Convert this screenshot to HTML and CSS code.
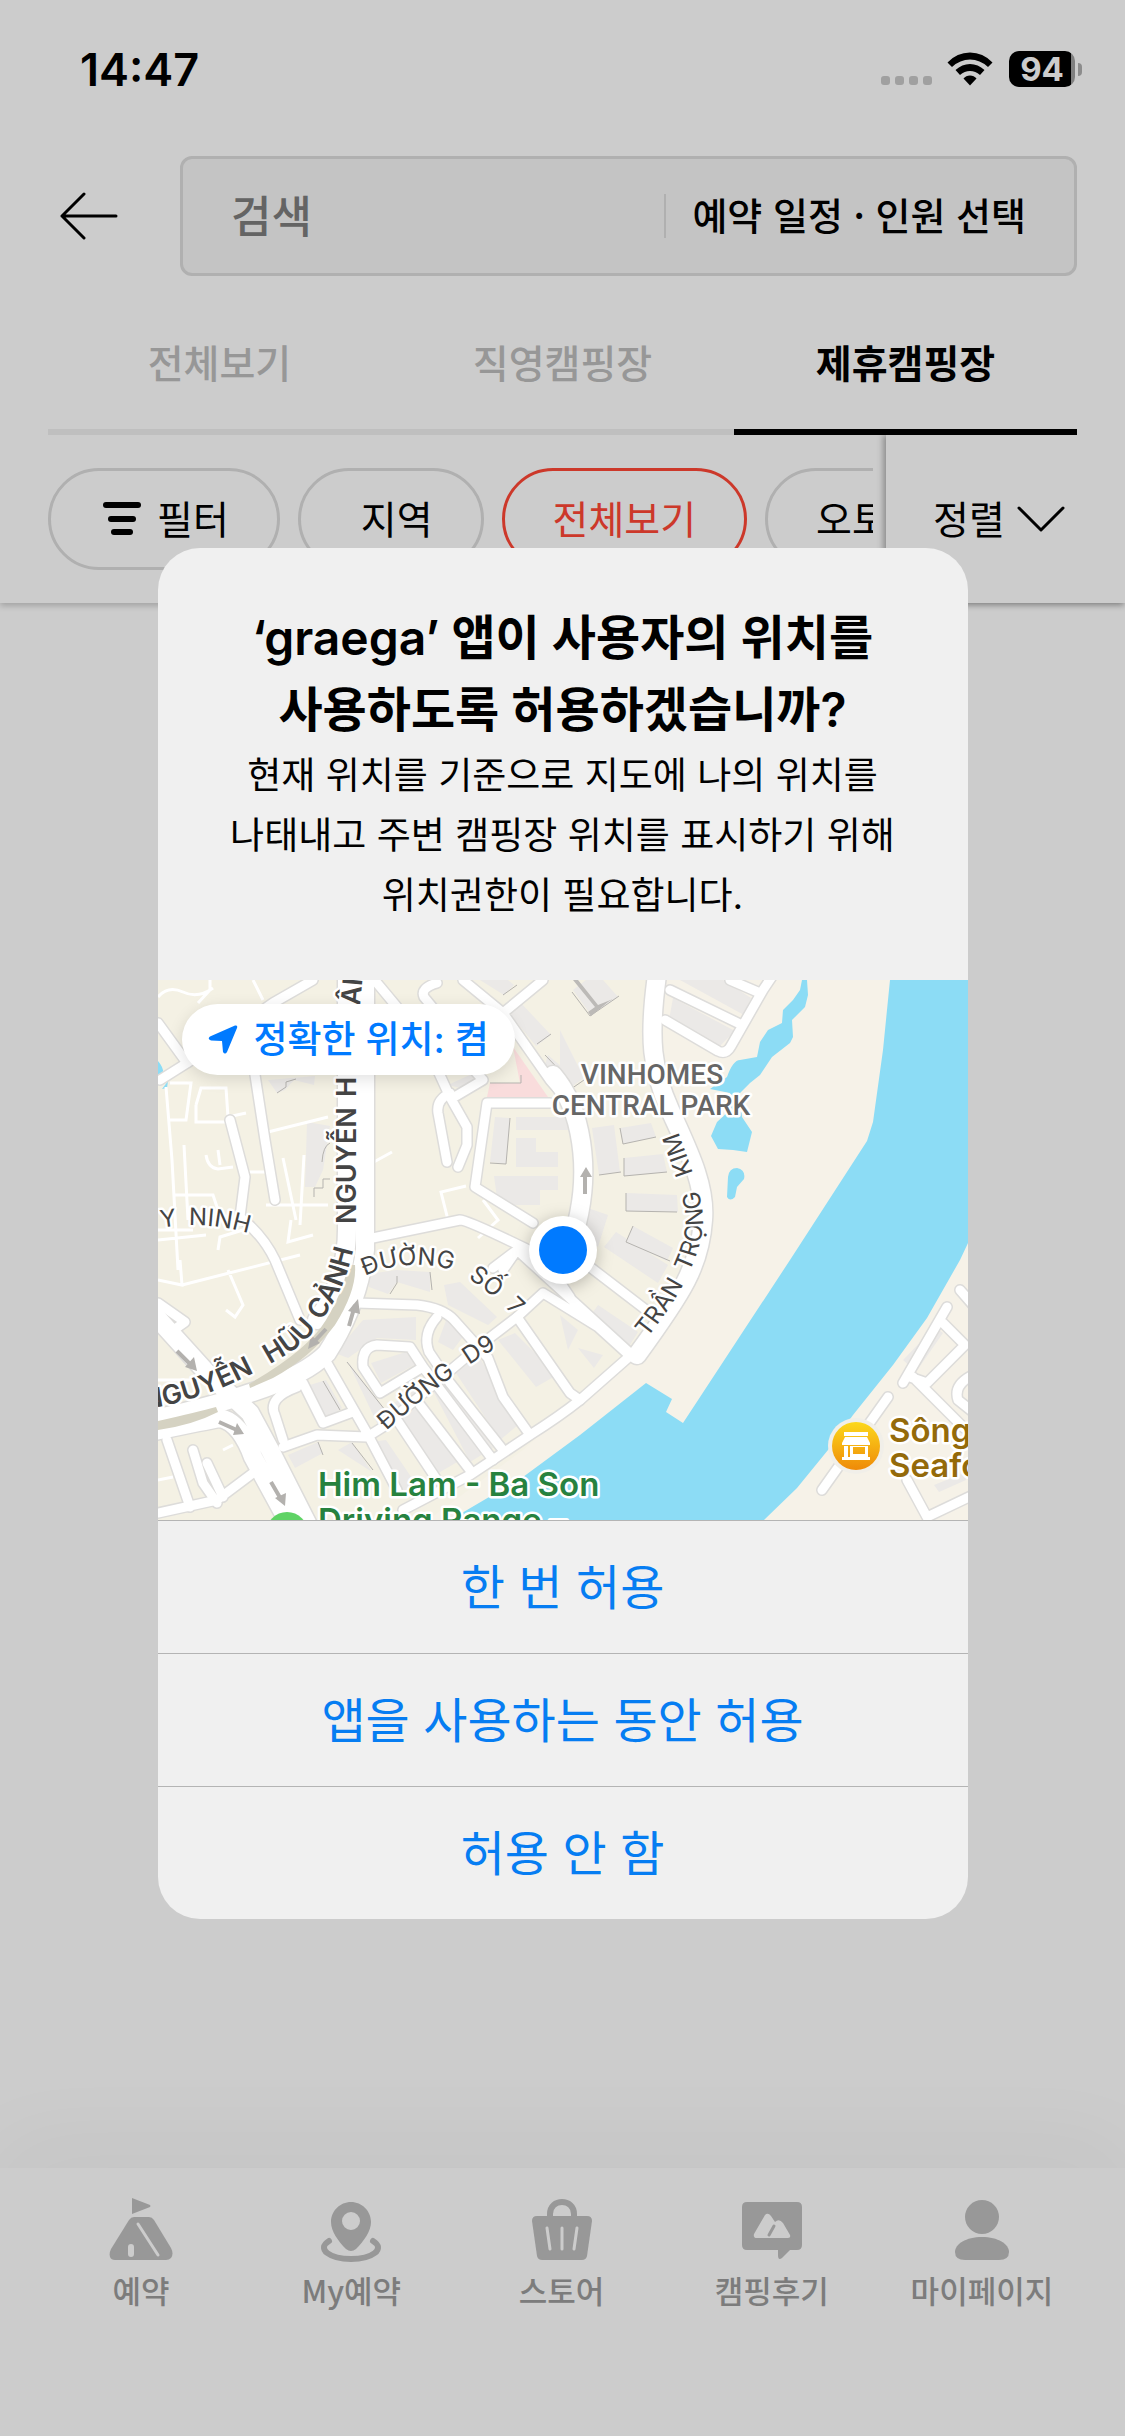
FILE: index.html
```html
<!DOCTYPE html>
<html lang="ko">
<head>
	<meta charset="utf-8">
	<meta name="viewport" content="width=device-width, initial-scale=1">
	<title>graega</title>
	<link rel="stylesheet" href="styles.css">
</head>
<body>
	<div class="status-bar">
		<span class="time">14:47</span>
		<div class="status-icons">
			<svg class="signal" width="52" height="34" viewBox="0 0 52 34" fill="#c9c9c9">
				<rect x="0" y="24" width="9" height="9" rx="3"/><rect x="14" y="24" width="9" height="9" rx="3"/><rect x="28" y="24" width="9" height="9" rx="3"/><rect x="42" y="24" width="9" height="9" rx="3"/>
			</svg>
			<svg class="wifi" width="46" height="34" viewBox="0 0 46 34">
				<path d="M0.500 10.500Q10 .500 23 .500T45.500 10.500L41 15Q33 7.500 23 7.500T5 15Z"/>
				<path d="M8.500 18Q15 12 23 12T37.500 18L33 23Q28.500 19 23 19T13 23Z"/>
				<path d="M16.500 26.500Q19 23.500 23 23.500T29.500 26.500L23 33.500Z"/>
			</svg>
			<span class="battery">94</span>
			<span class="battery-tip"></span>
		</div>
	</div>

	<div class="search-row">
		<button class="back" aria-label="뒤로">
			<svg width="58" height="48" viewBox="0 0 58 48" fill="none" stroke="#000" stroke-width="3" stroke-linecap="round" stroke-linejoin="round"><path d="M56 24H2M24 2 2 24 24 46"/></svg>
		</button>
		<div class="search-box">
			<input type="text" placeholder="검색" aria-label="검색">
			<button class="schedule">예약 일정 · 인원 선택</button>
		</div>
	</div>

	<div class="tabs">
		<button class="tab">전체보기</button>
		<button class="tab">직영캠핑장</button>
		<button class="tab active">제휴캠핑장</button>
	</div>

	<div class="filters">
		<div class="chips">
			<button class="chip chip-filter">
				<svg width="38" height="34" viewBox="0 0 38 34"><rect width="38" height="6" rx="3"/><rect x="5" y="14" width="28" height="6" rx="3"/><rect x="8" y="27" width="22" height="6" rx="3"/></svg>
				<span>필터</span>
			</button>
			<button class="chip chip-area"><span>지역</span></button>
			<button class="chip selected"><span>전체보기</span></button>
			<button class="chip"><span>오토캠핑</span></button>
		</div>
		<button class="sort">
			<span>정렬</span>
			<svg width="48" height="26" viewBox="0 0 48 26" fill="none" stroke="#000" stroke-width="3" stroke-linecap="round" stroke-linejoin="round"><path d="M2 2 24 24 46 2"/></svg>
		</button>
	</div>

	<div class="content"></div>

	<div class="bottom-nav">
		<a href="#">
			<svg width="64" height="64" viewBox="0 0 64 64">
				<path d="M23 0 41 7Q42 8 41 9L23 16Z"/>
				<path d="M25 19H40Q43 19 45 22L62 50Q65 56 62 60 60 62 57 62H6Q2 62 1 59 0 55 2 51L20 22Q22 19 25 19Z"/>
				<path class="cut" d="M29 26 49 57" stroke-width="3" stroke-linecap="round"/>
				<path class="cut" d="M22 49V56" stroke-width="6" stroke-linecap="round"/>
			</svg>
			예약
		</a>
		<a href="#">
			<svg width="64" height="64" viewBox="0 0 64 64">
				<path fill-rule="evenodd" d="M32 4C43 4 52 13 52 24 52 33 45 43 37 51Q32 55 27 51C19 43 12 33 12 24 12 13 21 4 32 4ZM32 14A9 9 0 1 0 32 32 9 9 0 1 0 32 14Z"/>
				<path d="M10 43C-3 51 11 61 32 61S67 51 54 43" fill="none" stroke="#bfbfbf" stroke-width="6" stroke-linecap="round"/>
			</svg>
			My예약
		</a>
		<a href="#">
			<svg width="64" height="64" viewBox="0 0 64 64">
				<path d="M20 20V16C20 0 44 0 44 16V20" fill="none" stroke="#bfbfbf" stroke-width="6"/>
				<path d="M7 18H57Q62 18 62 23L57 58Q56 62 52 62H12Q8 62 7 58L2 23Q2 18 7 18Z"/>
				<path class="cut" d="M17 30 20 51M32 30V51M47 30 44 51" stroke-width="3" stroke-linecap="round"/>
			</svg>
			스토어
		</a>
		<a href="#">
			<svg width="64" height="64" viewBox="0 0 64 64">
				<path d="M7 4H57Q62 4 62 9V47Q62 52 57 52H50L42 60Q38 63 38 57V52H7Q2 52 2 47V9Q2 4 7 4Z"/>
				<path d="M25 17Q28 14 31 18L35 24Q39 20 43 25L50 37Q51 40 48 40H17Q13 40 14 36Z" fill="#fff"/>
				<path d="M34 28 29 37" stroke="#bfbfbf" stroke-width="3" stroke-linecap="round"/>
			</svg>
			캠핑후기
		</a>
		<a href="#">
			<svg width="64" height="64" viewBox="0 0 64 64">
				<circle cx="32" cy="19" r="17"/>
				<path d="M32 39C48 39 59 46 59 54Q59 62 49 62H15Q5 62 5 54C5 46 16 39 32 39Z"/>
			</svg>
			마이페이지
		</a>
	</div>

	<div class="overlay">
		<div class="alert" role="dialog" aria-labelledby="alert-title">
			<div class="alert-text">
				<h1 id="alert-title">‘graega’ 앱이 사용자의 위치를<br>사용하도록 허용하겠습니까?</h1>
				<p>현재 위치를 기준으로 지도에 나의 위치를<br>나태내고 주변 캠핑장 위치를 표시하기 위해<br>위치권한이 필요합니다.</p>
			</div>
			<div class="map">
				<svg viewBox="0 0 810 540">
					<defs>
						<linearGradient id="poi" x1="0" y1="0" x2="0" y2="1"><stop offset="0" stop-color="#fcd81c"/><stop offset="1" stop-color="#ef8a08"/></linearGradient>
						<path id="t-huu" d="M-14 429C20 425 60 412 99 391S148 364 166 337 190 295 198 258"/>
						<path id="t-up" d="M198 244V60"/>
						<path id="t-top" d="M202 26 207 -30"/>
						<path id="t-ninh" d="M3 248Q50 240 96 255"/>
						<path id="t-so7" d="M207 296C240 280 285 282 308 297Q335 314 360 340"/>
						<path id="t-d9" d="M228 451Q290 395 342 366"/>
						<path id="t-kim" d="M489 358C520 320 545 275 545 240 545 215 530 180 516 140"/>
						<g id="roads">
							<path d="M0 43 29 83 2 100M29 83 115 23 155 0M97 95 107 160 117 220M72 140 87 197 82 237Q105 255 117 280L142 340"/>
							<path d="M279 3Q262 8 266 17L285 40M269 67 292 117 309 147V165L300 187M292 113Q278 120 280 133L289 182M298 116 325 100 314 88M219 3 239 27"/>
							<path d="M305 0 345 33 392 100 412 123M385 0 345 33M392 123H329L317 207 375 243M205 260 302 240Q310 240 385 277L412 317"/>
							<path d="M512 10 584 45M507 40 560 71Q568 75 573 66L605 10 615 -5M572 0 602 13M432 287 492 333"/>
							<path d="M345 290 359 270 335 288M359 270 472 373M385 313 359 337 412 413 422 420M385 313 440 347 472 376"/>
							<path d="M472 376 422 420Q402 436 372 455L312 495 245 530M199 323 259 325Q285 328 296 340L330 378 345 417 372 455"/>
							<path d="M279 337Q264 354 271 372L292 403 345 470M222 413 205 387Q203 367 219 365L252 367 265 387 222 413M265 387 335 480M239 440 279 500M262 425 312 490"/>
							<path d="M169 383 209 453 239 510M125 467 159 455 209 457 225 447 325 363 359 337M139 407Q109 418 117 435L125 460M145 403 165 443 192 433"/>
							<path d="M9 460 32 527M35 470 45 503 59 523M49 483 65 517M0 533 59 520 95 493M0 323 27 342 17 349"/>
							<path d="M789 327 745 403M785 343 807 365 769 403 752 397M755 397 806 448M730 417 664 510M802 310 815 325M749 500 769 537 815 515M815 395Q795 405 800 420L815 432"/>
						</g>
						<g id="main-roads">
							<path d="M189 0V245Q190 300 159 340M207 0V270Q200 325 169 373 148 395 92 413 52 427 -8 440"/>
							<path d="M-8 330 49 393 92 433 112 470 150 545M-8 452Q50 440 62 438 82 442 95 477L132 545"/>
							<path d="M499 -5C490 60 494 90 512 130 530 170 548 205 545 240 542 285 525 312 479 375"/>
							<path d="M395 95C425 130 432 190 419 243"/>
						</g>
					</defs>
					<rect width="810" height="540" fill="#f6f2e8"/>
					<path d="M0 0H500L494 67 545 190V250L475 373 365 470 270 540H0Z" fill="#f4f1e4"/>
					<path d="M732 0 725 70 715 142 709 161 632 280 525 443 508 432 514 419 488 403 422 455 365 497 309 530 292 540H606L639 508 670 470 695 435 735 385 769 338 802 280 810 263V0Z" fill="#8cdcf5"/>
					<path d="M644 0H649L650 15 647 27 634 40 635 57 632 63 614 77 602 95 592 103 582 113 584 137 594 152 589 172 575 170 560 169 553 156 559 142 572 130V113L552 109 569 97Q575 80 582 80L599 77 602 62 610 50 624 43 625 30 635 20 642 10Z" fill="#8cdcf5"/>
					<path d="M570 197Q571 188 579 188 588 190 586 199L579 207 577 217Q572 222 569 217ZM0 81Q6 88 5 94L0 96ZM4 109 10 101 9 108Z" fill="#8cdcf5"/>
					<path d="M355 67 390 117H329L332 103H362Z" fill="#f9dcdc"/>

					<g fill="#ebe9e7">
						<path d="M322 0 346 15 356 5 350 0ZM362 22 393 55 378 66 350 32ZM390 75 412 94V120L387 85ZM110 100 157 96 156 105 136 100 127 110 119 113ZM149 142 172 146 165 190 157 207H147ZM290 105 318 92 310 110Z"/>
						<path d="M337 137 352 138 348 184 332 182ZM358 137H410V150H358ZM358 158H378V172H400V187H358ZM336 196H400V210H382V225H340ZM402 50 426 98 412 108 402 95Z"/>
						<path d="M415 10 428 0H445L460 17 433 35ZM515 18 577 51 560 68 511 40ZM522 0H565L593 18 586 35ZM434 148 456 145 462 192 441 195Z"/>
						<path d="M462 148 493 143 498 157 465 164ZM466 178 505 174 509 192 466 196ZM468 213 519 215 520 232 468 231ZM475 246 515 268 509 281 468 262ZM458 252 510 285 500 303 446 267ZM440 325 480 352 470 368 431 338ZM430 228 450 235 440 267 427 258Z"/>
						<path d="M211 294 238 290 272 292V312L239 302 230 314 211 307ZM286 305 302 302 339 337 330 345 290 325ZM205 340 258 337V360L219 358 190 378 177 373Z"/>
						<path d="M213 383 248 372 258 384 223 403ZM152 405 168 400 184 428 166 440ZM190 382 218 418 232 436 219 443ZM290 335 310 350 295 370 280 362ZM340 360 357 353 399 395 378 407Z"/>
						<path d="M233 425 258 408 306 478 272 498ZM272 405 284 397 335 468 312 482ZM296 390 322 378 360 445 342 460ZM130 475 160 462 165 473 137 488ZM180 470 194 462 214 492ZM213 462 228 460 262 510 243 512Z"/>
						<path d="M402 335 420 350 410 370ZM420 368 445 375 436 388ZM745 380 777 347 785 353 758 392ZM776 505 806 493 808 500 781 512Z"/>
					</g>
					<g fill="none" stroke="#b5b3af" stroke-width="1">
						<path d="M345 15 359 5M379 64 393 54M387 75 412 101M119 113 128 107V102L138 99M172 163Q165 166 164 182M172 199H165V208H156V217M332 183 348 184 352 138M332 103H363V95M402 95 413 109 426 100M414 12 432 36 461 16M462 148 465 164 498 157M466 178V196L509 192M468 213V231L519 232M475 246 468 262 512 281M441 195 463 192"/>
						<path d="M239 296V303L232 314M272 292 274 310M189 382 231 435M165 401 182 430M160 462 165 475M194 463 215 490M378 360 398 395"/>
					</g>
					<path d="M420 0 440 25 455 19 450 22 433 36 430 32 437 27 415 0Z" fill="#bcbab7"/>

					<!-- alleys -->
					<g fill="none" stroke="#fff" stroke-width="3">
						<path d="M0 17Q10 5 25 12T55 8M40 23 52 10V-3M95 0 105 20M8 107 14 180 20 290M12 103H33L28 140H12M38 125 43 108H68L70 137 88 133M38 125 38 142H68M110 152 170 137M26 165 30 240M48 175Q50 188 60 189L75 187M62 185 60 170M87 192H110M125 178 138 240M146 175 142 245M108 225H170M214 183 234 172M290 240 283 212 308 206M325 220 340 240 320 258M0 250H35M0 260 48 255M60 270 62 257 85 250M22 280 24 305 0 300M24 305 142 275M70 290 85 325 77 337 68 330M133 240 130 262 155 255M15 215H55L60 230"/>
					</g>
					<path d="M65 470 75 465M0 500 15 497M40 400 0 400" stroke="#fff" stroke-width="3"/>

					<use href="#roads" class="casing"/>
					<use href="#main-roads" class="casing wide"/>
					<use href="#roads" class="road"/>
					<use href="#main-roads" class="road wide"/>
					<path d="M197 285Q199 310 177 345 152 378 115 398L92 408 91 404Q150 370 168 340 186 310 190 285ZM0 441Q40 432 58 427L60 432Q35 445 0 450Z" fill="#d5d2c2"/>

					<!-- one way arrows -->
					<g fill="none" stroke="#b3b1ae" stroke-width="4">
						<path d="M191 346 197 325M168 349 154 364M19 371 35 387M61 442 81 451M113 502 124 521M427 214V194"/>
					</g>
					<g fill="#b3b1ae">
						<path d="M200 319 190 331 202 334ZM150 369 153 355 162 363ZM39 391 36 377 27 387ZM86 454 79 443 75 455ZM127 526 128 513 117 518ZM428 187 422 197H434Z"/>
					</g>

					<g class="road-label">
						<text><textPath href="#t-ninh">Y</textPath></text>
						<text><textPath href="#t-ninh" startOffset="28">NINH</textPath></text>
						<text><textPath href="#t-so7">ĐƯỜNG</textPath></text>
						<text><textPath href="#t-so7" startOffset="107">SỐ</textPath></text>
						<text><textPath href="#t-so7" startOffset="154">7</textPath></text>
						<text><textPath href="#t-d9">ĐƯỜNG</textPath></text>
						<text><textPath href="#t-d9" startOffset="106">D9</textPath></text>
						<text><textPath href="#t-kim">TRẦN</textPath></text>
						<text><textPath href="#t-kim" startOffset="78">TRỌNG</textPath></text>
						<text><textPath href="#t-kim" startOffset="181">KIM</textPath></text>
					</g>
					<g class="road-label major">
						<text><textPath href="#t-huu">NGUYỄN</textPath></text>
						<text><textPath href="#t-huu" startOffset="134">HỮU</textPath></text>
						<text><textPath href="#t-huu" startOffset="202">CẢNH</textPath></text>
						<text><textPath href="#t-up">NGUYỄN</textPath></text>
						<text><textPath href="#t-up" startOffset="127">H</textPath></text>
						<text><textPath href="#t-top">ÂN</textPath></text>
					</g>
					<g class="district">
						<text x="494" y="104">VINHOMES</text>
						<text x="493" y="135">CENTRAL PARK</text>
					</g>
					<g class="place golf">
						<text x="160" y="516">Him Lam - Ba Son</text>
						<text x="160" y="552">Driving Range –</text>
					</g>
					<circle cx="129" cy="553" r="21" fill="#5fd365"/>
					<g class="place food">
						<text x="731" y="462">Sông</text>
						<text x="731" y="497">Seafood</text>
					</g>
					<circle cx="698" cy="466" r="28" fill="#f1efe9"/>
					<circle cx="698" cy="466" r="24" fill="url(#poi)"/>
					<path d="M686 452H710V456H686ZM687 457H709L712 463V465H684V463ZM686 466H690V477H692V466H710V477H712V480H684V477H686ZM695 467V474H707V467Z" fill="#fff" fill-rule="evenodd"/>
					<circle class="me" cx="405" cy="270" r="34" fill="#fff"/>
					<circle cx="405" cy="270" r="24" fill="#007aff"/>
				</svg>
				<button class="precise">
					<svg width="30" height="30" viewBox="0 0 30 30" fill="#007aff"><path d="M27 .500Q30 0 29 3L19 27Q17 30 15 27L14 16 3 15.500Q-1 14 2 11.500Z"/></svg>
					<span>정확한 위치: 켬</span>
				</button>
			</div>
			<button class="alert-btn">한 번 허용</button>
			<button class="alert-btn">앱을 사용하는 동안 허용</button>
			<button class="alert-btn">허용 안 함</button>
		</div>
	</div>
</body>
</html>
```

FILE: styles.css
```css
* {
	margin: 0;
	padding: 0;
	box-sizing: border-box;
}
body {
	position: relative;
	display: flex;
	flex-direction: column;
	min-height: 100vh;
	background: #fff;
	color: #000;
	font-family: "Noto Sans CJK KR", sans-serif;
	overflow-x: hidden;
}
button,
input {
	font-family: inherit;
	color: inherit;
	background: none;
	border: none;
	outline: none;
}
button {
	cursor: pointer;
}
svg {
	display: block;
	flex-shrink: 0;
}

/* status bar */
.status-bar {
	display: flex;
	justify-content: space-between;
	align-items: center;
	height: 138px;
	padding: 0 43px 0 80px;
	font-family: Inter, sans-serif;
}
.time {
	font-size: 45px;
	font-weight: 600;
}
.status-icons {
	display: flex;
	align-items: center;
}
.wifi {
	margin: 0 16px 0 14px;
}
.battery {
	width: 66px;
	height: 36px;
	line-height: 36px;
	border-radius: 10px;
	background: linear-gradient(90deg, #000 62px, #a0a0a0 62px);
	color: #fff;
	font-size: 33px;
	font-weight: 700;
	text-align: center;
}
.battery-tip {
	width: 4px;
	height: 13px;
	margin-left: 3px;
	border-radius: 0 4px 4px 0;
	background: #b0b0b0;
}

/* search */
.search-row {
	display: flex;
	align-items: center;
	padding: 18px 48px 0 60px;
}
.back {
	width: 120px;
}
.search-box {
	flex: 1;
	display: flex;
	align-items: center;
	height: 120px;
	padding: 0 48px;
	border: 3px solid #dcdcdc;
	border-radius: 12px;
	background: #f5f5f5;
}
.search-box input {
	flex: 1;
	min-width: 0;
	padding-bottom: 4px;
	font-size: 44px;
	font-weight: 500;
}
.search-box input::placeholder {
	color: #7d7d7d;
}
.schedule {
	padding: 0 0 4px 26px;
	border-left: 2px solid #dcdcdc;
	font-size: 38px;
	font-weight: 500;
	line-height: 40px;
}

/* tabs */
.tabs {
	display: flex;
	margin: 0 48px;
}
.tab {
	flex: 1;
	height: 159px;
	padding-top: 16px;
	border-bottom: 6px solid #efefef;
	color: #bdbdbd;
	font-size: 39px;
	font-weight: 500;
}
.tab.active {
	border-color: #000;
	color: #000;
	font-weight: 700;
}

/* filters */
.filters {
	display: flex;
	height: 168px;
	box-shadow: 0 3px 6px rgba(0,0,0,0.2);
	clip-path: inset(0 0 -12px 0);
}
.chips {
	flex: 1;
	display: flex;
	align-items: center;
	gap: 18px;
	min-width: 0;
	margin-right: 13px;
	padding-left: 48px;
	overflow: hidden;
}
.chip {
	flex-shrink: 0;
	display: flex;
	align-items: center;
	height: 102px;
	padding: 0 48px;
	border: 3px solid #dcdcdc;
	border-radius: 51px;
	font-size: 39px;
}
.chip span,
.sort span,
.precise span {
	padding-bottom: 5px;
}
.chip-filter {
	gap: 16px;
	padding: 0 48px 0 52px;
}
.chip-area {
	padding-left: 60px;
}
.chip.selected {
	border-color: #ff4735;
	color: #ff4735;
}
.sort {
	width: 239px;
	display: flex;
	align-items: center;
	gap: 12px;
	padding-left: 47px;
	font-size: 39px;
	box-shadow: -3px 0 6px rgba(0,0,0,0.3);
}
.content {
	flex: 1;
}

/* bottom navigation */
.bottom-nav {
	display: flex;
	height: 268px;
	padding: 30px 38px 0 36px;
	box-shadow: 0 -24px 90px rgba(0,0,0,0.04);
}
.bottom-nav a {
	flex: 1;
	display: flex;
	flex-direction: column;
	align-items: center;
	gap: 6px;
	color: #9c9c9c;
	font-size: 31px;
	font-weight: 500;
	line-height: 44px;
	text-decoration: none;
}
.bottom-nav svg {
	fill: #bfbfbf;
}
.bottom-nav .cut {
	fill: none;
	stroke: #fff;
}

/* permission alert */
.overlay {
	position: absolute;
	inset: 0;
	display: flex;
	align-items: center;
	justify-content: center;
	padding-top: 31px;
	background: rgba(0,0,0,0.2);
}
.alert {
	width: 72%;
	border-radius: 42px;
	background: #f0f0f0;
	font-family: Inter, "Noto Sans CJK KR", sans-serif;
	overflow: hidden;
}
.alert-text {
	padding: 54px 40px 54px;
	text-align: center;
}
.alert-text h1 {
	font-size: 48px;
	font-weight: 600;
	line-height: 72px;
}
.alert-text p {
	font-size: 37px;
	line-height: 60px;
}
.alert-btn {
	display: block;
	width: 100%;
	height: 133px;
	padding-bottom: 6px;
	border-top: 1px solid #b4b4b4;
	color: #067df2;
	font-size: 48px;
}

/* map */
.map {
	position: relative;
}
.map > svg {
	width: 100%;
}
.precise {
	position: absolute;
	top: 24px;
	left: 24px;
	display: flex;
	align-items: center;
	gap: 16px;
	height: 71px;
	padding: 0 26px;
	border-radius: 36px;
	background: #fff;
	color: #007aff;
	font-size: 37px;
	font-weight: 500;
	box-shadow: 0 4px 16px rgba(0,0,0,0.12);
}
.casing,
.road {
	fill: none;
	stroke-linecap: round;
	stroke-linejoin: round;
}
.casing {
	stroke: #dddcda;
	stroke-width: 12px;
}
.casing.wide {
	stroke-width: 21px;
}
.road {
	stroke: #fff;
	stroke-width: 9px;
}
.road.wide {
	stroke-width: 18px;
}
.map text {
	paint-order: stroke;
	stroke: #fff;
	stroke-width: 5px;
	stroke-linejoin: round;
}
.road-label {
	font-size: 24px;
	fill: #444;
}
.road-label.major {
	font-size: 27px;
	font-weight: 600;
}
.district {
	font-family: Roboto, sans-serif;
	font-size: 28px;
	font-weight: 500;
	fill: #666;
	text-anchor: middle;
}
.place {
	font-size: 33px;
	font-weight: 600;
}
.golf {
	fill: #27823f;
}
.food {
	fill: #946a0a;
}
.me {
	filter: drop-shadow(0 3px 8px rgba(0,0,0,0.25));
}
```
